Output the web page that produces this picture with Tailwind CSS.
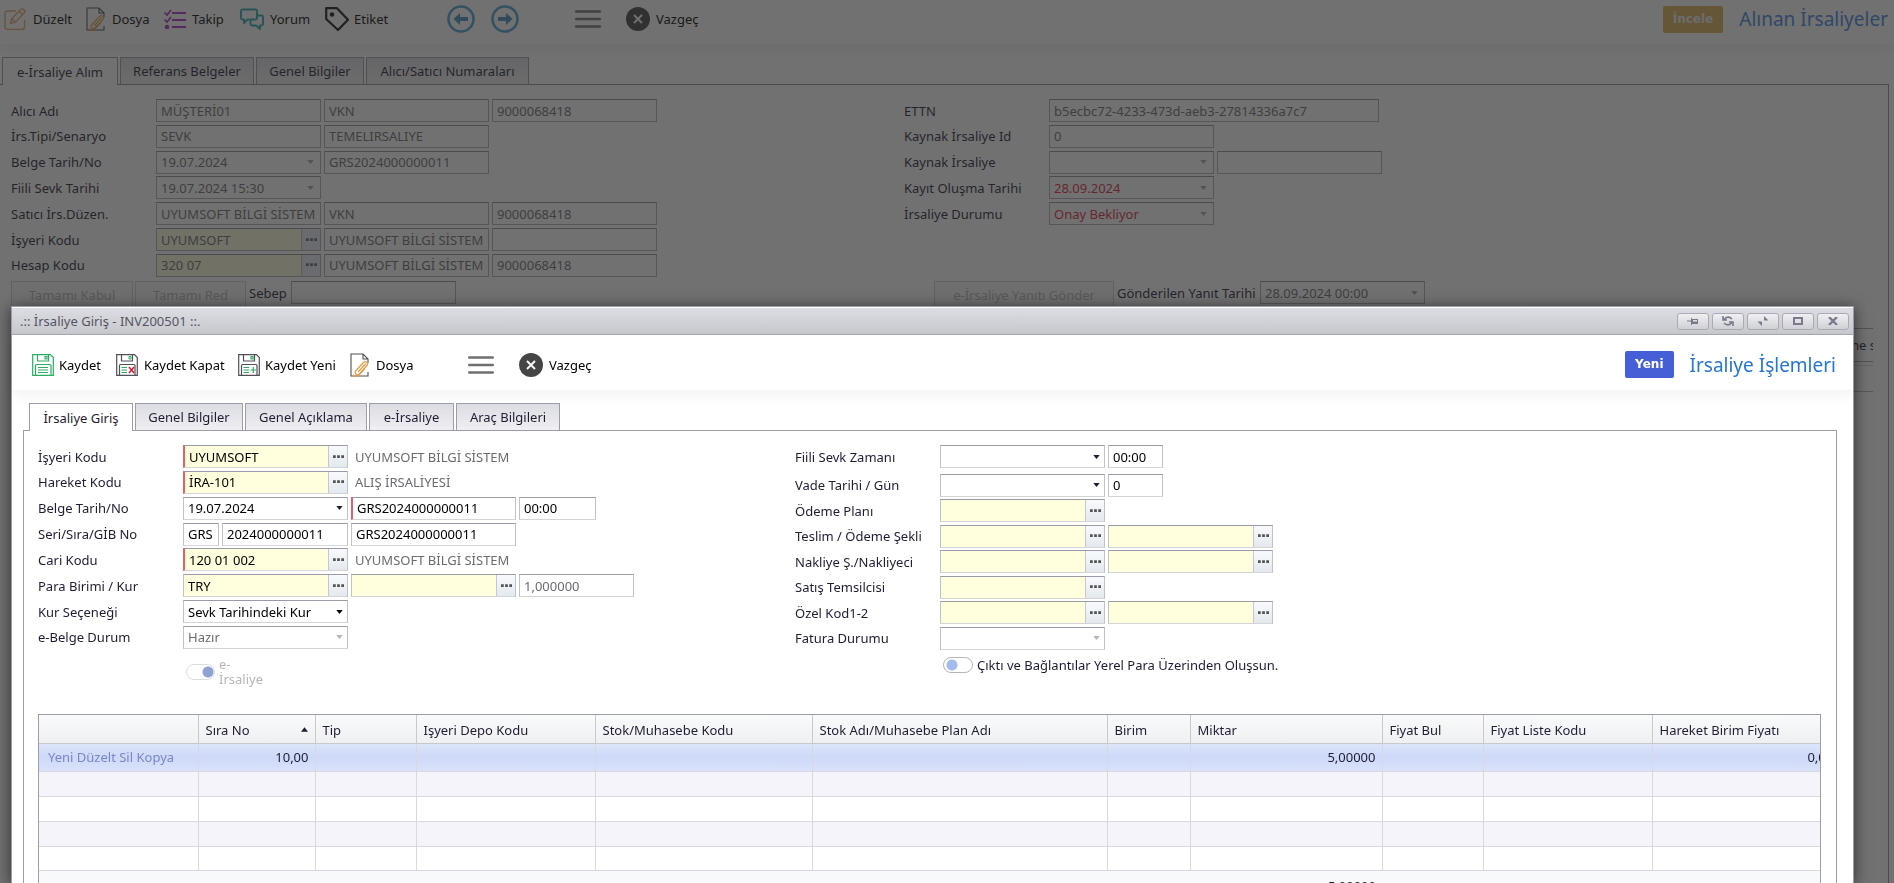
<!DOCTYPE html>
<html lang="tr">
<head>
<meta charset="utf-8">
<meta name="viewport" content="width=device-width, initial-scale=1">
<title>İrsaliye Giriş - INV200501</title>
<script src="https://cdn.jsdelivr.net/npm/@tailwindcss/browser@4"></script>
</head>
<body class="relative h-screen overflow-hidden bg-white font-['Tahoma','Noto_Sans',sans-serif] text-[13px] leading-4 text-[#1f1c33]">

<svg class="hidden" aria-hidden="true">
  <symbol id="dots" viewBox="0 0 12 4"><path d="M0 0h3v3H0zM4.5 0h3v3h-3zM9 0h3v3H9z" fill="currentColor"/></symbol>
  <symbol id="caret" viewBox="0 0 8 5"><path d="M0 0h8L4 5z" fill="currentColor"/></symbol>
  <symbol id="file" viewBox="0 0 20 24">
    <path d="M18 10V6l-5-5H1v22h17v-4M13 1v5h5" fill="none" stroke="#505050" stroke-width="1.1"/>
    <path d="M6 17.500L13.500 9.500c2-2 5.500.5 3.500 3L9.500 20.800c-2.500 2.500-6-.6-3.500-3.300M8.500 18.500l7-7.500M14.500 16l-6 6.500c-2 1.500-4 1-5-.5" fill="none" stroke="#e0a04a" stroke-width="1.300" stroke-linecap="round"/>
  </symbol>
  <symbol id="disk" viewBox="0 0 22 22">
    <path d="M.7 .7H18.500L21.300 3.500V21.300H.7zM5.500 .7V7h11V.7M3.500 21V11.500q0-1 1-1h13.500q1 0 1 1V21" fill="none" stroke="currentColor" stroke-width="1.200"/>
  </symbol>
  <symbol id="stop" viewBox="0 0 24 24"><circle cx="12" cy="12" r="12" fill="#454545"/><path d="M8 8l8 8M16 8l-8 8" stroke="#fff" stroke-width="1.800"/></symbol>
  <symbol id="bars" viewBox="0 0 26 18"><path d="M1.200 1.500h23.600M1.200 9h23.600M1.200 16.500h23.600" stroke="#707070" stroke-width="2.400" stroke-linecap="round"/></symbol>
</svg>

<!-- Received waybills page -->
<main class="flex h-screen flex-col">
  <header class="flex h-11 items-center pr-[6px] pl-1 pb-[6px] text-black shadow-[0_6px_12px_#0000000d]">
    <nav class="flex flex-1 items-center [&_button]:flex [&_button]:items-center">
      <button class="w-[82px] gap-[7px]"><svg class="size-[22px]" viewBox="0 0 22 22" fill="none" stroke="#e0a566" stroke-width="1.300"><path d="M12 3H3.500Q1 3 1 5.500V19q0 2.300 2.500 2.300H18q2.500 0 2.500-2.300V12"/><path d="M6.500 15.500l1.200-5L17 1.200q1.500-1 3 .5t.5 3L11.500 14zM15 3l4 4M7.700 10.500l3.800 3.500"/></svg>Düzelt</button>
      <button class="w-[78px] gap-[6px]"><svg class="h-6 w-5"><use href="#file"/></svg>Dosya</button>
      <button class="w-[76px] gap-[6px]"><svg class="h-5 w-[22px]" viewBox="0 0 22 20" fill="none" stroke="#a52fc4" stroke-width="2"><path d="M8 4h14M8 11h14M8 18h14"/><path d="M.5 3.500L3 6l4-5M.5 10.500L3 13l4-5" stroke-width="1.700"/><circle cx="3" cy="18" r="1.300"/></svg>Takip</button>
      <button class="w-[85px] gap-[6px]"><svg class="h-[22px] w-6" viewBox="0 0 24 22" fill="none" stroke="#2ba6b0" stroke-width="1.900" stroke-linejoin="round"><path d="M17 7V3q0-1.500-1.500-1.500H2.500Q1 1.500 1 3v7q0 1.500 1.500 1.500H4V15l3.500-3.500h2"/><path d="M17 7.500h4.500q1.500 0 1.500 1.500v7q0 1.500-1.500 1.500H20V21l-4-3.500h-4q-1.500 0-1.500-1.500v-4.500H15.500q1.500 0 1.500-1.500z"/></svg>Yorum</button>
      <button class="w-[122px] gap-[5px]"><svg class="size-6" viewBox="0 0 24 24" fill="none" stroke="#151515" stroke-width="2.200" stroke-linejoin="round"><path d="M1.200 1.200H12l11 11.500L13 23 1.200 12z"/><circle cx="7" cy="7.500" r="1.200" fill="#151515"/></svg>Etiket</button>
      <button class="w-11" aria-label="Önceki"><svg class="size-7" viewBox="0 0 28 28"><circle cx="14" cy="14" r="12.500" fill="none" stroke="#4da0d0" stroke-width="2.600"/><path d="M6.500 14l6.500-6v4h8v4h-8v4z" fill="#3f8fc0"/></svg></button>
      <button class="w-[84px]" aria-label="Sonraki"><svg class="size-7" viewBox="0 0 28 28"><circle cx="14" cy="14" r="12.500" fill="none" stroke="#4da0d0" stroke-width="2.600"/><path d="M21.500 14l-6.500-6v4H7v4h8v4z" fill="#3f8fc0"/></svg></button>
      <button class="w-[51px]" aria-label="Menü"><svg class="h-[18px] w-[26px]"><use href="#bars"/></svg></button>
      <button class="gap-[6px]"><svg class="size-6"><use href="#stop"/></svg>Vazgeç</button>
    </nav>
    <span class="mr-4 rounded-[2px] bg-[#d8b052] px-[10px] py-[5px] font-['DejaVu_Sans',sans-serif] text-xs font-bold leading-[17px] text-[#f0f0f0]">İncele</span>
    <h1 class="text-[19px] leading-6 text-[#3f86e0]">Alınan İrsaliyeler</h1>
  </header>

  <div class="mt-[13px] flex gap-[2px] pl-[2px] [&_button]:h-[27px] [&_button]:border [&_button]:border-b-0 [&_button]:border-[#9c9da9] [&_button]:bg-linear-to-b [&_button]:from-[#dcdde2] [&_button]:to-[#efeff2]" role="tablist">
    <button role="tab" aria-selected="true" class="relative -mb-px w-[116px] h-7! from-white! to-white!">e-İrsaliye Alım</button>
    <button role="tab" class="w-[134px]">Referans Belgeler</button>
    <button role="tab" class="w-[108px]">Genel Bilgiler</button>
    <button role="tab" class="w-[163px]">Alıcı/Satıcı Numaraları</button>
  </div>

  <section class="mr-[5px] min-h-0 flex-1 border-t border-r border-[#8c8d97] pt-[14px] pl-[11px]
    [&_.r]:flex [&_.r]:items-center [&_.r]:gap-[3px] [&_.r>label:first-child]:w-[142px]
    [&_.f]:flex [&_.f]:h-[23px] [&_.f]:w-[165px] [&_.f]:items-center [&_.f]:border [&_.f]:border-[#b0b1bb] [&_.f]:border-t-[#8f909c]
    [&_.f>input]:min-w-0 [&_.f>input]:flex-1 [&_.f>input]:px-1 [&_.f>input]:h-full [&_.f>input]:text-[#6d6d6d]
    [&_.f>button]:flex [&_.f>button]:h-full [&_.f>button]:w-[19px] [&_.f>button]:items-center [&_.f>button]:justify-center [&_.f>button]:text-[#a5a5a5]">
    <div class="flex">
      <div class="flex h-[178px] w-[893px] flex-col justify-between">
        <div class="r"><label for="b1">Alıcı Adı</label><div class="f"><input id="b1" value="MÜŞTERİ01" disabled></div><div class="f"><input aria-label="Vergi türü" value="VKN" disabled></div><div class="f"><input aria-label="Vergi no" value="9000068418" disabled></div></div>
        <div class="r"><label for="b2">İrs.Tipi/Senaryo</label><div class="f"><input id="b2" value="SEVK" disabled></div><div class="f"><input aria-label="Senaryo" value="TEMELIRSALIYE" disabled></div></div>
        <div class="r"><label for="b3">Belge Tarih/No</label><div class="f"><input id="b3" value="19.07.2024" disabled><button disabled aria-label="Takvim"><svg class="h-1 w-[7px]"><use href="#caret"/></svg></button></div><div class="f"><input aria-label="Belge no" value="GRS2024000000011" disabled></div></div>
        <div class="r"><label for="b4">Fiili Sevk Tarihi</label><div class="f"><input id="b4" value="19.07.2024 15:30" disabled><button disabled aria-label="Takvim"><svg class="h-1 w-[7px]"><use href="#caret"/></svg></button></div></div>
        <div class="r"><label for="b5">Satıcı İrs.Düzen.</label><div class="f"><input id="b5" value="UYUMSOFT BİLGİ SİSTEM" disabled></div><div class="f"><input aria-label="Vergi türü" value="VKN" disabled></div><div class="f"><input aria-label="Vergi no" value="9000068418" disabled></div></div>
        <div class="r"><label for="b6">İşyeri Kodu</label><div class="f bg-[#ffffde]"><input id="b6" value="UYUMSOFT" disabled><button aria-label="Seç" class="border-l border-[#c5c6d0] bg-[#e9eef6] text-[#666]!"><svg class="h-1 w-[11px]"><use href="#dots"/></svg></button></div><div class="f"><input aria-label="İşyeri adı" value="UYUMSOFT BİLGİ SİSTEM" disabled></div><div class="f"><input aria-label="İşyeri vergi no" disabled></div></div>
        <div class="r"><label for="b7">Hesap Kodu</label><div class="f bg-[#ffffde]"><input id="b7" value="320 07" disabled><button aria-label="Seç" class="border-l border-[#c5c6d0] bg-[#e9eef6] text-[#666]!"><svg class="h-1 w-[11px]"><use href="#dots"/></svg></button></div><div class="f"><input aria-label="Hesap adı" value="UYUMSOFT BİLGİ SİSTEM" disabled></div><div class="f"><input aria-label="Hesap vergi no" value="9000068418" disabled></div></div>
      </div>
      <div class="flex h-[126px] flex-col justify-between">
        <div class="r"><label for="c1">ETTN</label><div class="f w-[330px]!"><input id="c1" value="b5ecbc72-4233-473d-aeb3-27814336a7c7" disabled></div></div>
        <div class="r"><label for="c2">Kaynak İrsaliye Id</label><div class="f"><input id="c2" value="0" disabled></div></div>
        <div class="r"><label for="c3">Kaynak İrsaliye</label><div class="f"><input id="c3" disabled><button disabled aria-label="Aç"><svg class="h-1 w-[7px]"><use href="#caret"/></svg></button></div><div class="f"><input aria-label="Kaynak belge" disabled></div></div>
        <div class="r"><label for="c4">Kayıt Oluşma Tarihi</label><div class="f"><input id="c4" class="text-[#e0243c]!" value="28.09.2024" disabled><button disabled aria-label="Takvim"><svg class="h-1 w-[7px]"><use href="#caret"/></svg></button></div></div>
        <div class="r"><label for="c5">İrsaliye Durumu</label><div class="f"><input id="c5" class="text-[#e0243c]!" value="Onay Bekliyor" disabled><button disabled aria-label="Aç"><svg class="h-1 w-[7px]"><use href="#caret"/></svg></button></div></div>
      </div>
    </div>
    <div class="mt-1 flex items-start gap-[2px]">
      <button disabled class="h-7 w-[122px] border border-[#d0d0d5] bg-[#f8f8f8] text-[#b5b5b8]">Tamamı Kabul</button>
      <button disabled class="h-7 w-[111px] border border-[#d0d0d5] bg-[#f8f8f8] text-[#b5b5b8]">Tamamı Red</button>
      <label for="d1" class="w-[41px] pt-1 pl-px">Sebep</label>
      <div class="f"><input id="d1"></div>
      <div class="w-[474px]"></div>
      <button disabled class="h-7 w-[180px] border border-[#d0d0d5] bg-[#f8f8f8] text-[#b5b5b8]">e-İrsaliye Yanıtı Gönder</button>
      <label for="d2" class="w-[142px] pt-1 pl-px">Gönderilen Yanıt Tarihi</label>
      <div class="f"><input id="d2" value="28.09.2024 00:00" disabled><button disabled aria-label="Takvim"><svg class="h-1 w-[7px]"><use href="#caret"/></svg></button></div>
    </div>
    <div class="mt-[19px] mr-[15px] flex h-[34px] items-center justify-end overflow-hidden border-y border-[#a5a6b0]"><span class="-mr-[3px] whitespace-nowrap">me s</span></div>
    <div class="mt-[3px] mr-[15px] h-[27px] border-t border-b border-[#b5b6be] border-t-[#dcdce0]"></div>
  </section>
</main>

<div class="fixed inset-0 bg-[#272727]/66"></div>

<!-- Waybill entry window -->
<div role="dialog" aria-labelledby="dlg" class="absolute top-[306px] right-10 bottom-0 left-[11px] flex flex-col border border-b-0 border-[#9c9da9] bg-white shadow-[0_2px_14px_#0009]">
  <div class="flex h-7 shrink-0 items-center justify-between border-t border-b border-t-white border-b-[#a5a6b2] bg-linear-to-b from-[#dcdde2] to-[#c7c8ce] pr-1 pl-2
    [&_button]:flex [&_button]:h-[17px] [&_button]:w-8 [&_button]:items-center [&_button]:justify-center [&_button]:rounded-[3px] [&_button]:border [&_button]:border-[#a9aab6] [&_button]:bg-linear-to-b [&_button]:from-[#f0f0f3] [&_button]:to-[#cfd0d6] [&_button]:text-[#7a7a8a]">
    <h2 id="dlg" class="text-[#555562]">.:: İrsaliye Giriş - INV200501 ::.</h2>
    <div class="flex gap-[3px]">
      <button aria-label="Sabitle"><svg class="h-2 w-3" viewBox="0 0 12 8"><path d="M0 3.500h4V1h1v1h6v5H5v1H4V4.500H0zM6 3v1.500h4V3z" fill="currentColor" fill-rule="evenodd"/></svg></button>
      <button aria-label="Yenile"><svg class="h-[10px] w-3" viewBox="0 0 12 10" fill="none" stroke="currentColor" stroke-width="1.600"><path d="M1 0v4h4M2 3.500Q6-1 10 3M11 10V6H7M10 6.500Q6 11 2 7"/></svg></button>
      <button aria-label="Küçült"><svg class="h-[10px] w-3" viewBox="0 0 12 10" fill="currentColor"><path d="M7 0v4.500h4.500zM.5 5.500H5V10z"/></svg></button>
      <button aria-label="Büyüt"><svg class="h-2 w-[10px]" viewBox="0 0 10 8"><path d="M1 1h8v6H1z" fill="none" stroke="currentColor" stroke-width="2"/></svg></button>
      <button aria-label="Kapat"><svg class="h-2 w-[10px]" viewBox="0 0 10 8"><path d="M1 0l8 8M9 0L1 8" stroke="currentColor" stroke-width="2.400"/></svg></button>
    </div>
  </div>

  <header class="flex h-[55px] shrink-0 items-center pt-1 pr-[17px] pl-5 text-black shadow-[0_6px_12px_#0000000d]">
    <nav class="flex flex-1 items-center [&_button]:flex [&_button]:items-center">
      <button class="w-[84px] gap-[5px]"><svg class="size-[22px] text-[#2cab62]" viewBox="0 0 22 22" fill="none" stroke="currentColor"><use href="#disk"/><path d="M13 2.500h2V5h-2zM6 13.500h10M6 16h10M6 18.500h10" stroke-width="1.100"/></svg>Kaydet</button>
      <button class="w-[122px] gap-[6px]"><svg class="size-[22px] text-[#505058]" viewBox="0 0 22 22" fill="none"><use href="#disk"/><path d="M13 2.500h2V5h-2zM5.500 13.500h5.500M5.500 16h5.500M5.500 18.500h5.500" stroke="#2cab62"/><path d="M13 13l5 6M18 13l-5 6" stroke="#e0182d" stroke-width="1.500"/></svg>Kaydet Kapat</button>
      <button class="w-[112px] gap-[5px]"><svg class="size-[22px] text-[#505058]" viewBox="0 0 22 22" fill="none"><use href="#disk"/><path d="M13 2.500h2V5h-2zM5.500 13.500h5.500M5.500 16h5.500M5.500 18.500h5.500M12.500 16h5.500M15.250 13v6" stroke="#2cab62" stroke-width="1.200"/></svg>Kaydet Yeni</button>
      <button class="w-[118px] gap-[6px]"><svg class="h-6 w-5"><use href="#file"/></svg>Dosya</button>
      <button class="w-[51px]" aria-label="Menü"><svg class="h-[18px] w-[26px]"><use href="#bars"/></svg></button>
      <button class="gap-[6px]"><svg class="size-6"><use href="#stop"/></svg>Vazgeç</button>
    </nav>
    <span class="mr-4 rounded-[2px] bg-[#4560d6] px-[10px] py-[5px] font-['DejaVu_Sans',sans-serif] text-xs font-bold leading-[17px] text-white">Yeni</span>
    <h1 class="text-[19px] leading-6 text-[#2676d2]">İrsaliye İşlemleri</h1>
  </header>

  <div class="mt-[13px] flex shrink-0 gap-[2px] pl-[17px] [&_button]:h-[27px] [&_button]:border [&_button]:border-b-0 [&_button]:border-[#9c9da9] [&_button]:bg-linear-to-b [&_button]:from-[#dcdde2] [&_button]:to-[#efeff2]" role="tablist">
    <button role="tab" aria-selected="true" class="relative -mb-px w-[104px] h-7! from-white! to-white!">İrsaliye Giriş</button>
    <button role="tab" class="w-[108px]">Genel Bilgiler</button>
    <button role="tab" class="w-[122px]">Genel Açıklama</button>
    <button role="tab" class="w-[85px]">e-İrsaliye</button>
    <button role="tab" class="w-[104px]">Araç Bilgileri</button>
  </div>

  <section class="mr-4 ml-[11px] min-h-0 flex-1 overflow-hidden border border-b-0 border-[#9c9da9] pt-[14px] pr-[15px] pl-[14px]">
    <form class="flex h-[269px] items-start
      [&_.r]:flex [&_.r]:items-center [&_.r]:gap-[3px]
      [&_.f]:flex [&_.f]:h-[23px] [&_.f]:w-[165px] [&_.f]:items-center [&_.f]:border [&_.f]:border-[#c0c1c9] [&_.f]:border-t-[#9a9ba8] [&_.f]:border-b-[#d4d5da] [&_.f]:text-black
      [&_.q]:border-l-2 [&_.q]:border-l-[#ee5a68]
      [&_.f>input]:h-full [&_.f>input]:min-w-0 [&_.f>input]:flex-1 [&_.f>input]:px-1
      [&_.f>select]:h-full [&_.f>select]:min-w-0 [&_.f>select]:flex-1 [&_.f>select]:appearance-none [&_.f>select]:px-1
      [&_.y]:bg-[#ffffde]
      [&_.f>svg]:mr-1
      [&_.f>button]:flex [&_.f>button]:h-full [&_.f>button]:w-[15px] [&_.f>button]:items-center [&_.f>button]:justify-center [&_.f>button]:text-[#1f1c33]
      [&_.y>button]:w-[19px] [&_.y>button]:border-l [&_.y>button]:border-[#c5c6d0] [&_.y>button]:bg-linear-to-b [&_.y>button]:from-[#f8fafd] [&_.y>button]:to-[#e4e9ef] [&_.y>button]:text-[#555]">
      <div class="w-[757px]">
        <div class="flex h-[204px] flex-col justify-between [&_.r>label:first-child]:w-[142px] [&_output]:pl-1 [&_output]:text-[#6b6b72]">
          <div class="r"><label for="m1">İşyeri Kodu</label><div class="f q y"><input id="m1" value="UYUMSOFT"><button type="button" aria-label="Seç"><svg class="h-1 w-[11px]"><use href="#dots"/></svg></button></div><output>UYUMSOFT BİLGİ SİSTEM</output></div>
          <div class="r"><label for="m2">Hareket Kodu</label><div class="f q y"><input id="m2" value="İRA-101"><button type="button" aria-label="Seç"><svg class="h-1 w-[11px]"><use href="#dots"/></svg></button></div><output>ALIŞ İRSALİYESİ</output></div>
          <div class="r"><label for="m3">Belge Tarih/No</label><div class="f"><input id="m3" value="19.07.2024"><button type="button" aria-label="Takvim"><svg class="h-1 w-[7px]"><use href="#caret"/></svg></button></div><div class="f q"><input aria-label="Belge no" value="GRS2024000000011"></div><div class="f w-[77px]!"><input aria-label="Saat" value="00:00"></div></div>
          <div class="r"><label for="m4">Seri/Sıra/GİB No</label><div class="f w-[36px]!"><input id="m4" value="GRS"></div><div class="f w-[126px]!"><input aria-label="Sıra" value="2024000000011"></div><div class="f"><input aria-label="GİB no" value="GRS2024000000011"></div></div>
          <div class="r"><label for="m5">Cari Kodu</label><div class="f q y"><input id="m5" value="120 01 002"><button type="button" aria-label="Seç"><svg class="h-1 w-[11px]"><use href="#dots"/></svg></button></div><output>UYUMSOFT BİLGİ SİSTEM</output></div>
          <div class="r"><label for="m6">Para Birimi / Kur</label><div class="f y"><input id="m6" value="TRY"><button type="button" aria-label="Seç"><svg class="h-1 w-[11px]"><use href="#dots"/></svg></button></div><div class="f y"><input aria-label="Kur tipi"><button type="button" aria-label="Seç"><svg class="h-1 w-[11px]"><use href="#dots"/></svg></button></div><div class="f w-[115px]!"><input aria-label="Kur" class="text-[#6b6b72]" value="1,000000" disabled></div></div>
          <div class="r"><label for="m7">Kur Seçeneği</label><div class="f"><select id="m7"><option>Sevk Tarihindeki Kur</option></select><svg class="h-1 w-[7px]"><use href="#caret"/></svg></div></div>
          <div class="r"><label for="m8">e-Belge Durum</label><div class="f"><select id="m8" class="text-[#6b6b72] opacity-100" disabled><option>Hazır</option></select><svg class="h-1 w-[7px] text-[#b5b5bb]"><use href="#caret"/></svg></div></div>
        </div>
        <div class="mt-2 flex items-center gap-1 pl-[148px]">
          <input id="t1" type="checkbox" role="switch" checked disabled class="h-4 w-[29px] appearance-none rounded-full border border-[#dcdcdf] bg-[radial-gradient(circle_at_21px_7px,#8fa3d2_5px,transparent_6px)]">
          <label for="t1" class="w-12 leading-[15px] text-[#b7b7ba]">e-İrsaliye</label>
        </div>
      </div>
      <div>
        <div class="flex h-[205px] flex-col justify-between [&_.r>label:first-child]:w-[142px]">
          <div class="r mb-[3px]"><label for="n1">Fiili Sevk Zamanı</label><div class="f"><input id="n1"><button type="button" aria-label="Takvim"><svg class="h-1 w-[7px]"><use href="#caret"/></svg></button></div><div class="f w-[55px]!"><input aria-label="Sevk saati" value="00:00"></div></div>
          <div class="r"><label for="n2">Vade Tarihi / Gün</label><div class="f"><input id="n2"><button type="button" aria-label="Takvim"><svg class="h-1 w-[7px]"><use href="#caret"/></svg></button></div><div class="f w-[55px]!"><input aria-label="Gün" value="0"></div></div>
          <div class="r"><label for="n3">Ödeme Planı</label><div class="f y"><input id="n3"><button type="button" aria-label="Seç"><svg class="h-1 w-[11px]"><use href="#dots"/></svg></button></div></div>
          <div class="r"><label for="n4">Teslim / Ödeme Şekli</label><div class="f y"><input id="n4"><button type="button" aria-label="Seç"><svg class="h-1 w-[11px]"><use href="#dots"/></svg></button></div><div class="f y"><input aria-label="Ödeme şekli"><button type="button" aria-label="Seç"><svg class="h-1 w-[11px]"><use href="#dots"/></svg></button></div></div>
          <div class="r"><label for="n5">Nakliye Ş./Nakliyeci</label><div class="f y"><input id="n5"><button type="button" aria-label="Seç"><svg class="h-1 w-[11px]"><use href="#dots"/></svg></button></div><div class="f y"><input aria-label="Nakliyeci"><button type="button" aria-label="Seç"><svg class="h-1 w-[11px]"><use href="#dots"/></svg></button></div></div>
          <div class="r"><label for="n6">Satış Temsilcisi</label><div class="f y"><input id="n6"><button type="button" aria-label="Seç"><svg class="h-1 w-[11px]"><use href="#dots"/></svg></button></div></div>
          <div class="r"><label for="n7">Özel Kod1-2</label><div class="f y"><input id="n7"><button type="button" aria-label="Seç"><svg class="h-1 w-[11px]"><use href="#dots"/></svg></button></div><div class="f y"><input aria-label="Özel kod 2"><button type="button" aria-label="Seç"><svg class="h-1 w-[11px]"><use href="#dots"/></svg></button></div></div>
          <div class="r"><label for="n8">Fatura Durumu</label><div class="f"><select id="n8" class="opacity-100" disabled><option></option></select><svg class="h-1 w-[7px] text-[#b5b5bb]"><use href="#caret"/></svg></div></div>
        </div>
        <div class="mt-[7px] flex items-center gap-1 pl-[148px]">
          <input id="t2" type="checkbox" role="switch" class="h-4 w-[30px] appearance-none rounded-full border border-[#b5b5ba] bg-[radial-gradient(circle_at_8px_7px,#a3bcec_5px,transparent_6px)]">
          <label for="t2">Çıktı ve Bağlantılar Yerel Para Üzerinden Oluşsun.</label>
        </div>
      </div>
    </form>

    <div class="overflow-hidden border border-[#9c9da9]">
      <table class="w-[1823px] table-fixed border-collapse
        [&_th]:border-r [&_th]:border-b [&_th]:border-[#c9c9cd] [&_th]:px-[7px] [&_th]:pt-[2px] [&_th]:text-left [&_th]:font-normal
        [&_td]:border-r [&_td]:border-b [&_td]:border-[#d8d8de] [&_td]:px-[6px]">
        <colgroup><col class="w-[159px]"><col class="w-[117px]"><col class="w-[101px]"><col class="w-[179px]"><col class="w-[217px]"><col class="w-[295px]"><col class="w-[83px]"><col class="w-[192px]"><col class="w-[101px]"><col class="w-[169px]"><col class="w-[210px]"></colgroup>
        <thead><tr class="h-7 bg-linear-to-b from-[#f9fafa] to-[#eff0f2]">
          <th></th><th><span class="flex items-center justify-between">Sıra No<svg class="h-[5px] w-[7px] rotate-180"><use href="#caret"/></svg></span></th><th>Tip</th><th>Işyeri Depo Kodu</th><th>Stok/Muhasebe Kodu</th><th>Stok Adı/Muhasebe Plan Adı</th><th>Birim</th><th>Miktar</th><th>Fiyat Bul</th><th>Fiyat Liste Kodu</th><th>Hareket Birim Fiyatı</th>
        </tr></thead>
        <tbody>
          <tr class="h-7 bg-linear-to-b from-[#dfe6fb] via-[#cdd9f8] to-[#dae2fb]">
            <td class="whitespace-nowrap pl-[9px]! text-[#7d86c4]"><a href="#yeni">Yeni</a> <a href="#duzelt">Düzelt</a> <a href="#sil">Sil</a> <a href="#kopya">Kopya</a></td><td class="text-right">10,00</td><td></td><td></td><td></td><td></td><td></td><td class="text-right">5,00000</td><td></td><td></td><td class="text-right">0,00000</td></tr>
          <tr class="h-[25px] bg-[#f6f4fb]"><td></td><td></td><td></td><td></td><td></td><td></td><td></td><td></td><td></td><td></td><td></td></tr>
          <tr class="h-[25px]"><td></td><td></td><td></td><td></td><td></td><td></td><td></td><td></td><td></td><td></td><td></td></tr>
          <tr class="h-[25px] bg-[#f6f4fb]"><td></td><td></td><td></td><td></td><td></td><td></td><td></td><td></td><td></td><td></td><td></td></tr>
          <tr class="h-[24px]"><td></td><td></td><td></td><td></td><td></td><td></td><td></td><td></td><td></td><td></td><td></td></tr>
        </tbody>
        <tfoot><tr class="h-8 bg-[#f8f9fb] [&>td]:border-r-0!"><td colspan="7"></td><td class="text-right">5,00000</td><td colspan="3"></td></tr></tfoot>
      </table>
    </div>
  </section>
</div>
</body>
</html>
